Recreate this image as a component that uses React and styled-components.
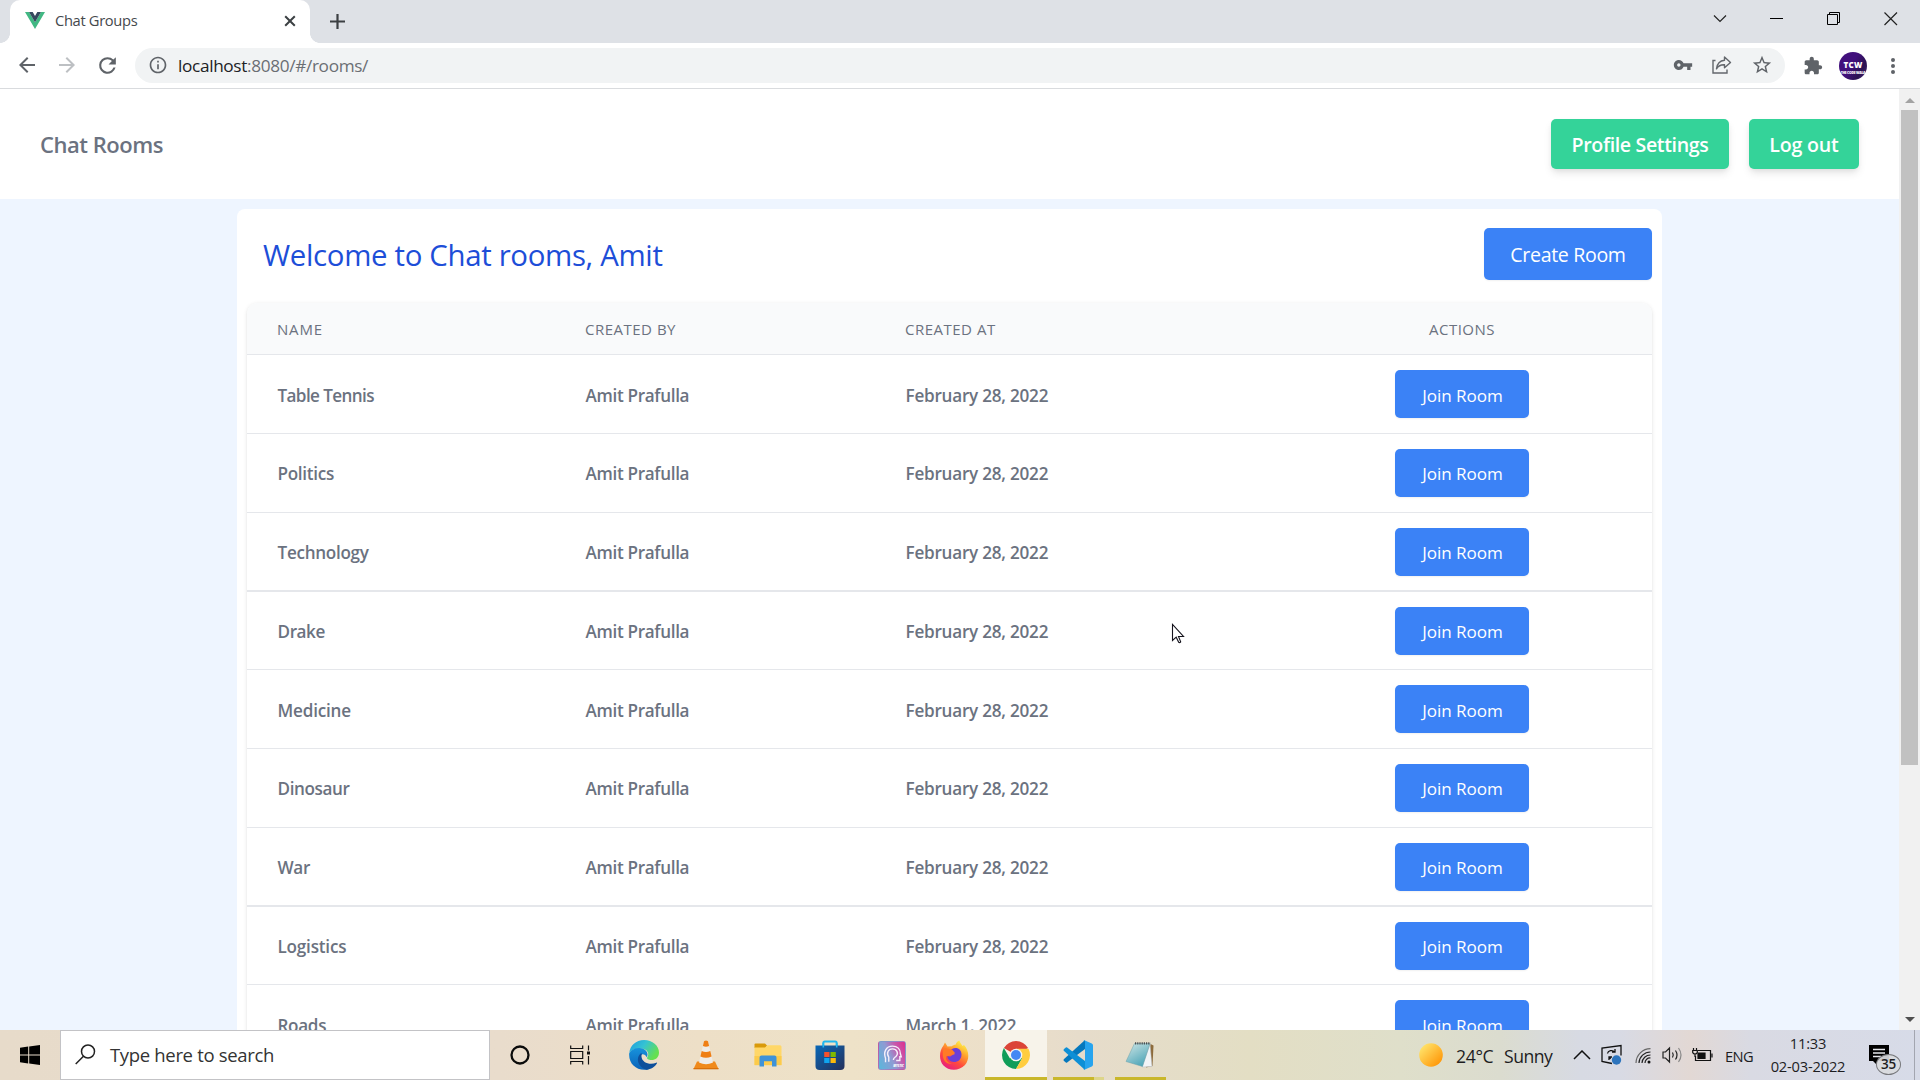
import React from "react";
import styled, { createGlobalStyle, css } from "styled-components";

const GlobalStyle = createGlobalStyle`
  * { box-sizing: border-box; }
  html, body { margin: 0; padding: 0; height: 1080px; overflow: hidden; }
  body { font-family: "Open Sans", "Noto Sans", sans-serif; background: #fff; }
  button { font-family: inherit; border: 0; padding: 0; cursor: pointer; }
  svg { display: block; flex: none; }
`;

const Desktop = styled.div`
  width: 1920px;
  height: 1080px;
  display: flex;
  flex-direction: column;
  overflow: hidden;
`;

/* ---------- browser chrome ---------- */

const TabStrip = styled.header`
  height: 43px;
  flex: none;
  display: flex;
  align-items: stretch;
  background: #dee1e6;
  padding-left: 10px;
`;

const Tab = styled.div`
  position: relative;
  width: 300px;
  background: #fff;
  border-radius: 10px 10px 0 0;
  display: flex;
  align-items: center;
  padding: 0 14px 2px 15px;
  &::before, &::after {
    content: "";
    position: absolute;
    bottom: 0;
    width: 10px;
    height: 10px;
  }
  &::before { left: -10px; background: radial-gradient(circle at 0 0, transparent 9.6px, #fff 10.2px); }
  &::after { right: -10px; background: radial-gradient(circle at 100% 0, transparent 9.6px, #fff 10.2px); }
`;

const TabTitle = styled.span`
  flex: 1;
  margin: 0 0 2px 10px;
  font-size: 14.7px;
  letter-spacing: -0.33px;
  color: #45494d;
`;

const NewTab = styled.div`
  display: flex;
  align-items: center;
  padding: 0 0 1px 20px;
`;

const WindowControls = styled.div`
  margin-left: auto;
  display: flex;
  padding: 11px 22px 0 0;
  gap: 43px;
`;

const Toolbar = styled.div`
  height: 46px;
  flex: none;
  display: flex;
  align-items: center;
  border-bottom: 1px solid #d9dbde;
  background: #fff;
  padding: 0 20px 0 15px;
`;

const NavButtons = styled.div`
  display: flex;
  gap: 16px;
  width: 120px;
`;

const Omnibox = styled.div`
  flex: none;
  width: 1650px;
  height: 35px;
  margin-bottom: 1px;
  border-radius: 18px;
  background: #f1f3f4;
  display: flex;
  align-items: center;
  padding: 0 12px 0 13px;
`;

const Url = styled.span`
  flex: 1;
  margin: 1px 0 0 10px;
  font-size: 17.2px;
  line-height: 24px;
  letter-spacing: -0.33px;
  color: #6a6e73;
  b { font-weight: 400; color: #202124; }
`;

const OmniActions = styled.div`
  display: flex;
  align-items: center;
  gap: 19px;
`;

const ToolbarEnd = styled.div`
  display: flex;
  align-items: center;
  margin-left: auto;
`;

const Avatar = styled.div`
  width: 28px;
  height: 28px;
  margin: 0 19px 0 16px;
  border-radius: 50%;
  overflow: hidden;
  background: linear-gradient(120deg, #41107c 45%, #2a1150 75%, #4a2a80);
  color: #fff;
  display: flex;
  flex-direction: column;
  align-items: center;
  justify-content: center;
  font-weight: 800;
  font-size: 8px;
  line-height: 9px;
  letter-spacing: 0.2px;
  padding-top: 4px;
  small { font-size: 3.4px; line-height: 7px; letter-spacing: -0.25px; white-space: nowrap; }
`;

/* ---------- page ---------- */

const Viewport = styled.div`
  height: 941px;
  flex: none;
  display: flex;
`;

const Page = styled.main`
  flex: 1;
  background: #eef5ff;
  overflow: hidden;
  display: flex;
  flex-direction: column;
  align-items: center;
`;

const NavBar = styled.nav`
  width: 100%;
  height: 110px;
  flex: none;
  background: #fff;
  display: flex;
  align-items: center;
  gap: 20px;
  padding: 0 40px;
`;

const Brand = styled.h1`
  margin: 0 auto 0 0;
  font-size: 22px;
  line-height: 30px;
  font-weight: 600;
  letter-spacing: -0.47px;
  color: #6b7280;
`;

const NavButton = styled.button`
  width: ${(p) => p.$width}px;
  height: 50px;
  margin-bottom: -0.5px;
  border-radius: 5px;
  background: #34d399;
  color: #fff;
  font-size: 19.6px;
  font-weight: 600;
  letter-spacing: ${(p) => p.$tracking}px;
  padding-top: 1px;
  box-shadow: 0 5px 8px -1px rgba(0, 0, 0, 0.1), 0 2px 5px -1px rgba(0, 0, 0, 0.06);
`;

const Card = styled.section`
  width: 1425px;
  height: 1200px;
  flex: none;
  margin-top: 10px;
  background: #fff;
  border-radius: 8px;
  padding: 19px 10px 0;
`;

const CardHead = styled.div`
  display: flex;
  align-items: center;
  justify-content: space-between;
  padding-left: 16px;
`;

const Welcome = styled.h2`
  margin: 2px 0 0;
  font-size: 29.4px;
  line-height: 36px;
  font-weight: 370;
  letter-spacing: -0.33px;
  color: #1d4ed8;
`;

const blueButton = css`
  background: #3b82f6;
  color: #fff;
  border-radius: 5px;
  box-shadow: 0 1px 2px rgba(0, 0, 0, 0.06);
`;

const CreateButton = styled.button`
  ${blueButton}
  width: 168px;
  height: 52px;
  font-size: 19.6px;
  letter-spacing: -0.35px;
`;

const Table = styled.div`
  margin-top: 23px;
  border-radius: 10px;
  box-shadow: 0 1px 4px rgba(0, 0, 0, 0.1), 0 1px 2px rgba(0, 0, 0, 0.06);
`;

const rowGrid = css`
  display: grid;
  grid-template-columns: 308px 320px 397px 380px;
  align-items: center;
`;

const HeadRow = styled.div`
  ${rowGrid}
  height: 52px;
  background: #f9fafb;
  border-bottom: 1px solid #e5e7eb;
  border-radius: 10px 10px 0 0;
`;

const HeadCell = styled.div`
  padding-left: ${(p) => (p.$center ? 0 : 30)}px;
  text-align: ${(p) => (p.$center ? "center" : "left")};
  font-size: 15px;
  font-weight: 520;
  letter-spacing: ${(p) => p.$tracking || 0.5}px;
  color: #6b7280;
`;

const Row = styled.div`
  ${rowGrid}
  height: ${(p) => p.$height}px;
  background: #fff;
  border-bottom: ${(p) => (p.$thick ? 2 : 1)}px solid #e5e7eb;
  align-items: start;
`;

const Cell = styled.div`
  padding: ${(p) => (p.$low ? 29 : 28)}px 0 0 30.5px;
  font-size: 17.1px;
  line-height: 24px;
  font-weight: 550;
  letter-spacing: ${(p) => p.$tracking || 0}px;
  color: #6b7280;
`;

const ActionCell = styled.div`
  display: flex;
  justify-content: center;
  padding-top: 15px;
`;

const JoinButton = styled.button`
  ${blueButton}
  width: 134px;
  height: 48px;
  font-size: 17.1px;
  letter-spacing: -0.08px;
  padding: ${(p) => (p.$low ? 2 : 0)}px 0 0 1px;
`;

const Scrollbar = styled.aside`
  width: 21px;
  background: #f1f1f1;
  display: flex;
  flex-direction: column;
  align-items: center;
  padding: 9px 0 8px;
`;

const Thumb = styled.div`
  width: 17px;
  height: 655px;
  margin: 7px 0 auto;
  background: #c1c1c1;
`;

const Cursor = styled.svg`
  position: absolute;
  left: 1171px;
  top: 623px;
`;

/* ---------- taskbar ---------- */

const Taskbar = styled.footer`
  height: 50px;
  flex: none;
  display: flex;
  background: linear-gradient(90deg, #e7dbca 0, #e9dccc 500px, #eddfc7 700px, #eee2c8 850px, #ecdfc9 1000px, #e6dccb 1080px, #e3dec4 1250px, #dfdfca 1400px, #dbdccf 1500px, #d7dae3 1580px, #d8dae4 1620px, #e2d8d4 1690px, #d9dae3 1750px, #d7dbe8 1920px);
`;

const Slot = styled.div`
  width: ${(p) => p.$width || 62}px;
  position: relative;
  display: flex;
  align-items: center;
  justify-content: center;
  padding-right: ${(p) => p.$nudge || 0}px;
  background: ${(p) => (p.$active ? "#f7f3ea" : "transparent")};
`;

const Underline = styled.i`
  position: absolute;
  bottom: 0;
  height: 3px;
  left: ${(p) => p.$left}px;
  width: ${(p) => p.$width}px;
  background: ${(p) => (p.$soft ? "#ddd589" : "#c9b72b")};
`;

const SearchBox = styled.div`
  width: 430px;
  height: 50px;
  margin-right: -1px;
  background: #fff;
  border: 1px solid #c3c3c6;
  display: flex;
  align-items: center;
  gap: 14px;
  padding: 0 0 1px 14px;
  font-size: 18.5px;
  letter-spacing: -0.33px;
  color: #333;
`;

const Tray = styled.div`
  margin-left: auto;
  width: 501px;
  display: flex;
  align-items: center;
  font-size: 18px;
  color: #1d1d1f;
`;

const TrayText = styled.span`
  flex: none;
  width: ${(p) => p.$width}px;
  margin-left: ${(p) => p.$gap || 0}px;
  margin-top: 1px;
  font-size: ${(p) => p.$size || 17.6}px;
  letter-spacing: ${(p) => p.$tracking || -0.35}px;
  white-space: nowrap;
`;

const TrayIcon = styled.div`
  flex: none;
  margin-left: ${(p) => p.$gap}px;
`;

const Clock = styled.div`
  flex: none;
  width: 90px;
  margin-left: 8px;
  font-size: 14.7px;
  line-height: 23px;
  letter-spacing: -0.2px;
  text-align: center;
`;

const Notifications = styled.div`
  position: relative;
  flex: none;
  width: 22px;
  height: 20px;
  margin: -1px 0 0 16px;
`;

const Badge = styled.span`
  position: absolute;
  left: 7px;
  top: 9px;
  width: 25px;
  height: 21px;
  border: 1px solid #77787c;
  border-radius: 50%;
  background: rgba(217, 218, 222, 0.93);
  font-size: 13.5px;
  font-weight: 600;
  line-height: 19px;
  letter-spacing: -0.3px;
  text-align: center;
`;

const ShowDesktop = styled.div`
  width: 6px;
  height: 50px;
  margin-left: auto;
  border-left: 1px solid #a3a6b0;
`;

/* ---------- icons ---------- */

const Glyph = ({ d, size, color = "#5f6368" }) => (
  <svg width={size} height={size} viewBox="0 0 24 24" fill={color}><path d={d} /></svg>
);

const BACK = "M20 11H7.83l5.59-5.59L12 4l-8 8 8 8 1.41-1.41L7.83 13H20v-2z";
const FORWARD = "M12 4l-1.41 1.41L16.17 11H4v2h12.17l-5.58 5.59L12 20l8-8z";
const RELOAD = "M17.65 6.35A7.96 7.96 0 0 0 12 4a8 8 0 1 0 7.73 10h-2.08A6 6 0 1 1 12 6c1.66 0 3.14.69 4.22 1.78L13 11h7V4l-2.35 2.35z";
const INFO = "M11 7h2v2h-2zm0 4h2v6h-2zm1-9C6.48 2 2 6.48 2 12s4.48 10 10 10 10-4.48 10-10S17.52 2 12 2zm0 18c-4.41 0-8-3.59-8-8s3.59-8 8-8 8 3.59 8 8-3.59 8-8 8z";
const KEY = "M12.65 10C11.83 7.67 9.61 6 7 6c-3.31 0-6 2.69-6 6s2.69 6 6 6c2.61 0 4.83-1.67 5.65-4H17v4h4v-4h2v-4H12.65zM7 14c-1.1 0-2-.9-2-2s.9-2 2-2 2 .9 2 2-.9 2-2 2z";
const STAR = "M22 9.24l-7.19-.62L12 2 9.19 8.63 2 9.24l5.46 4.73L5.82 21 12 17.27 18.18 21l-1.63-7.03L22 9.24zM12 15.4l-3.76 2.27 1-4.28-3.32-2.88 4.38-.38L12 6.1l1.71 4.04 4.38.38-3.32 2.88 1 4.28L12 15.4z";
const PUZZLE = "M20.5 11H19V7c0-1.1-.9-2-2-2h-4V3.500C13 2.120 11.880 1 10.500 1S8 2.120 8 3.500V5H4c-1.100 0-1.990.9-1.990 2v3.800H3.500c1.490 0 2.700 1.210 2.700 2.700s-1.210 2.700-2.700 2.700H2V20c0 1.100.9 2 2 2h3.800v-1.500c0-1.490 1.210-2.700 2.700-2.700 1.490 0 2.700 1.210 2.700 2.700V22H17c1.100 0 2-.9 2-2v-4h1.500c1.380 0 2.500-1.120 2.500-2.500S21.880 11 20.500 11z";

const VueLogo = () => (
  <svg width="20" height="17" viewBox="0 0 20 17">
    <path d="M0 0h4l6 10.300L16 0h4L10 17z" fill="#41b883" />
    <path d="M4 0h3.700L10 4l2.300-4H16l-6 10.300z" fill="#35495e" />
  </svg>
);

const ShareIcon = () => (
  <svg width="20" height="18" viewBox="0 0 20 18" fill="none" stroke="#63676c" strokeWidth="1.400">
    <path d="M3.500 4.500H1V17h14v-3.500" />
    <path d="M12.500 1l6 5.500-6 5.300V8.700C9 8.500 6.300 9.800 4.500 12.800 5.100 8 7.500 4.800 12.500 4.300z" strokeLinejoin="round" />
  </svg>
);

const Cortana = () => (
  <svg width="22" height="22" viewBox="0 0 22 22"><circle cx="11" cy="11" r="8.500" fill="none" stroke="#0b0b0b" strokeWidth="2.300" /></svg>
);

const TaskView = () => (
  <svg width="24" height="22" viewBox="0 0 24 22" fill="none" stroke="#111" strokeWidth="1.200">
    <path d="M1.700 1.500v3h12v-3M1.700 20.500v-3h12v3M1.700 7.500h12v7h-12zM19.500 1.500v5M19.500 12v8.500" />
    <path d="M18 7.500h3v3h-3z" fill="#111" stroke="none" />
  </svg>
);

const Edge = () => (
  <svg width="30" height="30" viewBox="0 0 30 30">
    <defs>
      <linearGradient id="edgeTop" x1="0" y1="0" x2="1" y2="0.500"><stop offset="0" stopColor="#1d9be0" /><stop offset="0.500" stopColor="#35c3d3" /><stop offset="1" stopColor="#66e050" /></linearGradient>
      <linearGradient id="edgeBody" x1="0" y1="0" x2="0" y2="1"><stop offset="0" stopColor="#1792dc" /><stop offset="1" stopColor="#0a62b8" /></linearGradient>
    </defs>
    <path d="M0.300 13C1 5.500 7 0 15 0c8.500 0 15 5.800 15 12.500 0 5-3.500 7.500-7.500 7.500-3 0-5.200-1-4.200-2.700C21 13 18 9 12 8.500 6 8.200 2 10 .3 13z" fill="url(#edgeTop)" />
    <path d="M.2 13.200C2 9.800 6 7.800 10.500 8c4.500.2 8 3 8 6.500 0 1-.3 2-.8 2.800-2-5-9-3.500-8 3.200.8 5.200 6 8.500 10.300 8.800C8.500 32-.8 24.500.2 13.200z" fill="url(#edgeBody)" />
    <path d="M11.500 13.500C6.500 18 8.500 27 17.500 29.700c4.500-.2 8.500-3 10.500-6.400.3-.6-.2-.9-.7-.6-6.500 3-14.300-.3-14.800-6 0-1.200 0-2 .8-3.200z" fill="#0d4f9b" />
  </svg>
);

const Vlc = () => (
  <svg width="26" height="30" viewBox="0 0 26 30">
    <path d="M4 21.500h18l3.500 7.500H.5z" fill="#f08a1c" />
    <path d="M.5 28h25v1.300H.5z" fill="#d9700a" />
    <path d="M11 1.200Q13 0 15 1.200L20 22.500Q13 26 6 22.500z" fill="#efece8" />
    <path d="M11 1.200Q13 0 15 1.200l1.100 4.700q-3.100 1.500-6.200 0zM8.700 11q4.300 2 8.600 0l1.300 5.500q-5.600 2.700-11.200 0z" fill="#ef7f16" />
  </svg>
);

const Folder = () => (
  <svg width="28" height="24" viewBox="0 0 28 24">
    <path d="M.5 1.500Q.5.500 1.500.500h9.500l2 2-1.500 2.500H.5z" fill="#d99a0b" />
    <path d="M.5 4.500h10.500l2.500-2.200H26q1.500 0 1.500 1.500V22H.5z" fill="#ffd768" />
    <path d="M.5 13h27v9.200H.5z" fill="#fccb4b" />
    <path d="M5.500 23.500v-9q0-2 2-2h13q2 0 2 2v9h-4.500v-5.200h-8v5.200z" fill="#3f93d8" />
  </svg>
);

const Store = () => (
  <svg width="30" height="30" viewBox="0 0 30 30">
    <defs><linearGradient id="storeBag" x1="0" y1="0" x2="1" y2="1"><stop offset="0" stopColor="#0868b8" /><stop offset="1" stopColor="#26305a" /></linearGradient></defs>
    <path d="M8.300 8V3q0-1.500 1.500-1.500h10.400q1.500 0 1.500 1.500v5" fill="none" stroke="#20b6ee" strokeWidth="2" />
    <path d="M.5 5.500h29V26q0 4-4 4h-21q-4 0-4-4z" fill="url(#storeBag)" />
    <path d="M8.300 3v4.500M21.700 3v4.500" stroke="#20b6ee" strokeWidth="1.600" />
    <path d="M9.200 12h5.300v5H9.200z" fill="#f4512c" /><path d="M15.500 12h5.300v5h-5.300z" fill="#7fba00" />
    <path d="M9.200 18h5.300v5H9.200z" fill="#10a5ef" /><path d="M15.500 18h5.300v5h-5.300z" fill="#fdb90b" />
  </svg>
);

const MsiBox = styled.div`
  width: 28px;
  height: 29px;
  border-radius: 3px;
  border: 1px solid rgba(150, 130, 190, 0.5);
  background: linear-gradient(65deg, #58b8dc, #8f9bd3 45%, #c45cae 70%, #df2d8d);
  position: relative;
  span { position: absolute; right: 1px; bottom: 0; font-size: 3px; line-height: 5px; font-weight: 800; font-style: italic; color: #fff; }
`;

const Msi = () => (
  <MsiBox>
    <svg width="26" height="24" viewBox="0 0 26 26" fill="none" stroke="#f6effa" strokeWidth="1.500">
      <path d="M6 22v-4.500C3.500 11 6.500 4.500 13.500 4.500c5.500 0 8.500 3.500 8.500 8l1 3.500h-1.500v4h-4" />
      <path d="M9.500 21.500v-5C6.500 12 9 7.500 13.500 7.500s7 4.500 4 8c-1.500 1.500-3 1.500-3 4" />
    </svg>
    <span>MYSTIC</span>
  </MsiBox>
);

const Firefox = () => (
  <svg width="30" height="30" viewBox="0 0 30 30">
    <defs>
      <linearGradient id="foxFire" x1="0.800" y1="0" x2="0.200" y2="1"><stop offset="0.050" stopColor="#fff04a" /><stop offset="0.350" stopColor="#ffa22b" /><stop offset="0.650" stopColor="#ff4a3d" /><stop offset="1" stopColor="#e3178c" /></linearGradient>
    </defs>
    <path d="M4.500 5.500 6 2.500 8.500 6.500 13 6.200C14 5 16 4.500 16.500 4.700 17.500 2 19 .8 20.500.500c.5 2.500 2 3.500 3 5.500l1.500-1C30 10 31 19 26 25c-6 6.500-16.500 6-21.500.5C-.5 20 .2 11 4.500 5.500z" fill="url(#foxFire)" />
    <path d="M13 9c5-2.500 9.500.5 9.500 5.500S19 22 15 22s-7-3-6.500-6.500c1 1.500 3.500 1 4.500-.3l3-1.200c-1-1.500-3.500-1-4.500-2.500-.3-1 .5-2 1.500-2.500z" fill="#6a3fd8" />
    <path d="M4.500 9c3-1.800 6 .8 8.500.500l3 3.500-4 1.500c-1 2-3 1.500-4.500 1.500C6 20 9 23 13 23.500 6 25 2 18 4.500 9z" fill="#ff7a25" />
  </svg>
);

const Chrome = () => (
  <svg width="28" height="28" viewBox="0 0 28 28">
    <path d="M14 14 1.880 7A14 14 0 0 1 26.120 7z" fill="#db4437" />
    <path d="M14 14v0L8 17.500 1.880 7A14 14 0 0 0 14 28l6.100-10.500z" fill="#109d59" />
    <path d="M14 7.700H26.500A14 14 0 0 1 14 28l6-10.500z" fill="#ffcd40" />
    <circle cx="14" cy="14" r="6.300" fill="#f4f4f4" />
    <circle cx="14" cy="14" r="5" fill="#4587f4" />
  </svg>
);

const VsCode = () => (
  <svg width="30" height="30" viewBox="0 0 30 30">
    <path d="M22 0 0.800 19.300q-.6.700 0 1.400l2 1.800q.6.500 1.300 0L22 9z" fill="#0578bd" />
    <path d="M22 30 .8 10.700q-.6-.7 0-1.400l2-1.800q.6-.5 1.300 0L22 21z" fill="#0d8fd6" />
    <path d="M21.300 0.300 28.800 3.500q1.200.500 1.200 2v19q0 1.500-1.200 2l-7.500 3.200q-.8.200-1.300-.4 1.500.5 2-1V1.700q-.5-1.500-2-1 .5-.6 1.300-.4z" fill="#27a4ee" />
  </svg>
);

const Notepad = () => (
  <svg width="30" height="28" viewBox="0 0 30 28">
    <defs><linearGradient id="padSheet" x1="0" y1="0" x2="0.600" y2="1"><stop offset="0" stopColor="#cfe6e6" /><stop offset="1" stopColor="#4fa6b8" /></linearGradient></defs>
    <path d="M25.500 3 28.500 4.500 27.500 25 21 26.500z" fill="#8d6b3b" />
    <path d="M25 3 27 25.500 17 26z" fill="#f1f4f6" stroke="#b6bcc2" strokeWidth="0.500" />
    <path d="M9.500 2.500H25L17.500 25.500 1 20.500z" fill="url(#padSheet)" stroke="#6ba0aa" strokeWidth="0.500" />
    <path d="M10 2.300h15.500" stroke="#4b4f52" strokeWidth="2.200" strokeDasharray="1.200 1" />
  </svg>
);

const OutlineIcon = ({ w, h, d, width = 1.4, color = "#111" }) => (
  <svg width={w} height={h} viewBox={`0 0 ${w} ${h}`} fill="none" stroke={color} strokeWidth={width}><path d={d} /></svg>
);

/* ---------- content ---------- */

const ROOMS = [
  { name: "Table Tennis", tracking: -0.6, height: 79, low: true },
  { name: "Politics", tracking: -0.3, height: 79 },
  { name: "Technology", tracking: -0.28, height: 79, thick: true },
  { name: "Drake", tracking: -0.4, height: 78 },
  { name: "Medicine", tracking: -0.2, height: 79, low: true },
  { name: "Dinosaur", tracking: -0.4, height: 79 },
  { name: "War", tracking: -0.3, height: 79, thick: true },
  { name: "Logistics", tracking: -0.2, height: 78 },
  { name: "Roads", tracking: -0.3, height: 79, low: true, date: "March 1, 2022" },
];

export default function App() {
  return (
    <Desktop>
      <GlobalStyle />
      <TabStrip>
        <Tab>
          <VueLogo />
          <TabTitle>Chat Groups</TabTitle>
          <OutlineIcon w={12} h={12} d="M1.200 1.200 10.800 10.800M10.800 1.200 1.200 10.800" width={2} color="#3c4043" />
        </Tab>
        <NewTab><OutlineIcon w={15} h={15} d="M7.500 0v15M0 7.500h15" width={2.2} color="#3c4043" /></NewTab>
        <WindowControls>
          <OutlineIcon w={14} h={15} d="M1 4.500 7 10.500 13 4.500" width={1.2} color="#222" />
          <OutlineIcon w={14} h={15} d="M0 7.500h13" width={1} color="#000" />
          <OutlineIcon w={14} h={15} d="M.500 3.500h10v10h-10zM2.500 3.500v-2h10v10h-2" width={1} color="#000" />
          <OutlineIcon w={14} h={15} d="M.500 1.500 13 14M13 1.500.500 14" width={1.2} color="#222" />
        </WindowControls>
      </TabStrip>

      <Toolbar>
        <NavButtons>
          <Glyph d={BACK} size={24} />
          <Glyph d={FORWARD} size={24} color="#bdc0c3" />
          <Glyph d={RELOAD} size={25} />
        </NavButtons>
        <Omnibox>
          <Glyph d={INFO} size={20} />
          <Url><b>localhost</b>:8080/#/rooms/</Url>
          <OmniActions>
            <Glyph d={KEY} size={20} />
            <ShareIcon />
            <Glyph d={STAR} size={22} />
          </OmniActions>
        </Omnibox>
        <ToolbarEnd>
          <Glyph d={PUZZLE} size={20} />
          <Avatar>TCW<small>THE CODE WALA</small></Avatar>
          <svg width="14" height="20" viewBox="0 0 14 20" fill="#5f6368"><circle cx="7" cy="4" r="2" /><circle cx="7" cy="10" r="2" /><circle cx="7" cy="16" r="2" /></svg>
        </ToolbarEnd>
      </Toolbar>

      <Viewport>
        <Page>
          <NavBar>
            <Brand>Chat Rooms</Brand>
            <NavButton $width={178} $tracking={-0.37}>Profile Settings</NavButton>
            <NavButton $width={110} $tracking={-0.2}>Log out</NavButton>
          </NavBar>
          <Card>
            <CardHead>
              <Welcome>Welcome to Chat rooms, Amit</Welcome>
              <CreateButton>Create Room</CreateButton>
            </CardHead>
            <Table>
              <HeadRow>
                <HeadCell $tracking={0.8}>NAME</HeadCell>
                <HeadCell>CREATED BY</HeadCell>
                <HeadCell>CREATED AT</HeadCell>
                <HeadCell $center>ACTIONS</HeadCell>
              </HeadRow>
              {ROOMS.map((room) => (
                <Row key={room.name} $height={room.height} $thick={room.thick}>
                  <Cell $low={room.low} $tracking={room.tracking}>{room.name}</Cell>
                  <Cell $low={room.low} $tracking={-0.32}>Amit Prafulla</Cell>
                  <Cell $low={room.low} $tracking={room.date ? -0.32 : -0.22}>{room.date || "February 28, 2022"}</Cell>
                  <ActionCell><JoinButton $low={room.low}>Join Room</JoinButton></ActionCell>
                </Row>
              ))}
            </Table>
          </Card>
        </Page>
        <Scrollbar>
          <svg width="10" height="5" viewBox="0 0 10 5"><path d="M0 5 5 0l5 5z" fill="#a3a3a3" /></svg>
          <Thumb />
          <svg width="10" height="5" viewBox="0 0 10 5"><path d="M0 0h10L5 5z" fill="#505050" /></svg>
        </Scrollbar>
      </Viewport>

      <Taskbar>
        <Slot $width={60}>
          <svg width="20" height="20" viewBox="0 0 20 20" fill="#000"><path d="M0 2.800 8.200 1.600V9.500H0zM9.200 1.500 20 0v9.500H9.200zM0 10.500h8.200v7.900L0 17.200zM9.200 10.500H20V20L9.200 18.500z" /></svg>
        </Slot>
        <SearchBox>
          <svg width="21" height="21" viewBox="0 0 21 21" fill="none" stroke="#222" strokeWidth="1.500"><circle cx="13" cy="7.500" r="6.500" /><path d="M8.500 12.200.700 20" /></svg>
          Type here to search
        </SearchBox>
        <Slot><Cortana /></Slot>
        <Slot $nudge={2}><TaskView /></Slot>
        <Slot><Edge /></Slot>
        <Slot><Vlc /></Slot>
        <Slot><Folder /></Slot>
        <Slot $nudge={1}><Store /></Slot>
        <Slot><Msi /></Slot>
        <Slot><Firefox /></Slot>
        <Slot $active><Chrome /><Underline $left={0} $width={62} /></Slot>
        <Slot><VsCode /><Underline $left={6} $width={41} /><Underline $left={47} $width={10} $soft /></Slot>
        <Slot><Notepad /><Underline $left={6} $width={51} /></Slot>
        <Tray>
          <svg width="24" height="24" viewBox="0 0 24 24">
            <defs><linearGradient id="sun" x1="0" y1="0" x2="1" y2="1"><stop offset="0.150" stopColor="#ffe066" /><stop offset="0.850" stopColor="#ff9a0c" /></linearGradient></defs>
            <circle cx="12" cy="12" r="11.800" fill="url(#sun)" />
          </svg>
          <TrayText $width={39} $gap={13}>24°C</TrayText>
          <TrayText $width={50} $gap={9} $tracking={-0.5}>Sunny</TrayText>
          <TrayIcon $gap={19}><OutlineIcon w={18} h={10} d="M1 9 9 1l8 8" width={1.5} /></TrayIcon>
          <TrayIcon $gap={10}>
            <svg width="22" height="22" viewBox="0 0 22 22" fill="none" stroke="#111" strokeWidth="1.300">
              <path d="M11 19.500 1 17.500V4L20 1.500v10" />
              <path d="M6.500 9.500c.5-3 5-4 7-1.500M14 5v3.200h-3M8 16v-3h3M8.200 13.200l1.500 1.500" />
              <circle cx="15.500" cy="16" r="4.700" fill="#2d74bd" stroke="none" />
            </svg>
          </TrayIcon>
          <TrayIcon $gap={12}>
            <svg width="17" height="17" viewBox="0 0 17 17" fill="none" stroke="#222" strokeWidth="1.200">
              <path d="M10 16a5 5 0 0 1 5.500-5M7 16a8.500 8.500 0 0 1 8.500-8M4 16A11.500 11.500 0 0 1 15.500 5" /><path d="M1 16A14.500 14.500 0 0 1 15.500 1.700" stroke="#666" /><circle cx="14" cy="15" r="1.500" fill="#111" stroke="none" />
            </svg>
          </TrayIcon>
          <TrayIcon $gap={10}>
            <svg width="21" height="18" viewBox="0 0 21 18" fill="none" stroke="#222" strokeWidth="1.200">
              <path d="M1 6h2.500l4-4v14l-4-4H1zM10.500 6.500q1.500 2.500 0 5M13.500 4.500q3 4.500 0 9" /><path d="M16.500 2q5 7 0 14" stroke="#888" />
            </svg>
          </TrayIcon>
          <TrayIcon $gap={9}>
            <svg width="21" height="16" viewBox="0 0 21 16" fill="none" stroke="#111" strokeWidth="1.200">
              <path d="M6 3.500h12.500v10H3.500V9M20 6.500v4M1.500 1v2M4.500 1v2M.700 3.500h4.600v2Q4.700 7 3 7T.700 5.500zM3 7v3" /><path d="M6 6h7v5.500H6z" fill="#111" />
            </svg>
          </TrayIcon>
          <TrayText $width={30} $gap={12} $size={14.7} $tracking={-0.6}>ENG</TrayText>
          <Clock>11:33<br />02-03-2022</Clock>
          <Notifications>
            <svg width="20" height="20" viewBox="0 0 20 20"><path d="M0 0h20v16H8v4l-4-4H0z" fill="#000" /><path d="M4 4.500h12M4 8h12M4 11.500h8" stroke="#e6e7ec" strokeWidth="1.300" /></svg>
            <Badge>35</Badge>
          </Notifications>
          <ShowDesktop />
        </Tray>
      </Taskbar>

      <Cursor width="14" height="21" viewBox="0 0 14 21">
        <path d="M1.500 1.500v16l3.700-3.300 2.500 5.100q1 .7 2-.5L7.500 13.500h5z" fill="#fff" stroke="#14131c" strokeWidth="1.100" />
      </Cursor>
    </Desktop>
  );
}
